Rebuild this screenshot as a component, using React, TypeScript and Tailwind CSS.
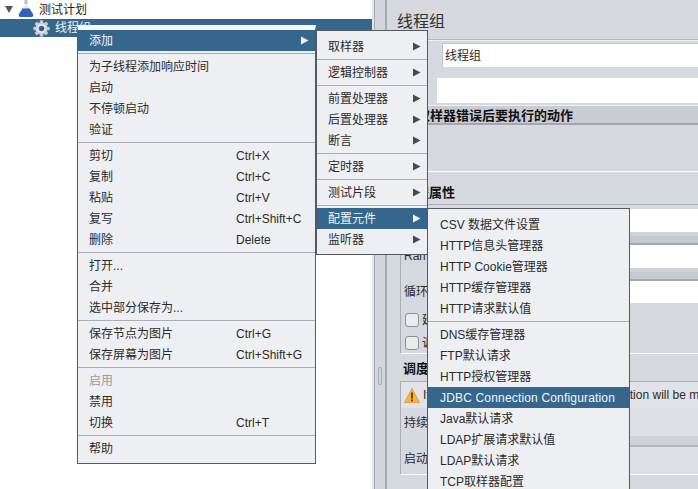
import React from "react";

type Entry =
  | { sep: true }
  | { label: string; shortcut?: string; arrow?: boolean; active?: boolean; disabled?: boolean; wide?: boolean; sep?: false };

const S: Entry = { sep: true };

const menu1: Entry[] = [
  { label: "添加", arrow: true, active: true },
  S,
  { label: "为子线程添加响应时间" },
  { label: "启动" },
  { label: "不停顿启动" },
  { label: "验证" },
  S,
  { label: "剪切", shortcut: "Ctrl+X" },
  { label: "复制", shortcut: "Ctrl+C" },
  { label: "粘贴", shortcut: "Ctrl+V" },
  { label: "复写", shortcut: "Ctrl+Shift+C" },
  { label: "删除", shortcut: "Delete" },
  S,
  { label: "打开..." },
  { label: "合并" },
  { label: "选中部分保存为..." },
  S,
  { label: "保存节点为图片", shortcut: "Ctrl+G" },
  { label: "保存屏幕为图片", shortcut: "Ctrl+Shift+G" },
  S,
  { label: "启用", disabled: true },
  { label: "禁用" },
  { label: "切换", shortcut: "Ctrl+T" },
  S,
  { label: "帮助" },
];

const menu2: Entry[] = [
  { label: "取样器", arrow: true },
  S,
  { label: "逻辑控制器", arrow: true },
  S,
  { label: "前置处理器", arrow: true },
  { label: "后置处理器", arrow: true },
  { label: "断言", arrow: true },
  S,
  { label: "定时器", arrow: true },
  S,
  { label: "测试片段", arrow: true },
  S,
  { label: "配置元件", arrow: true, active: true },
  { label: "监听器", arrow: true },
];

const menu3: Entry[] = [
  { label: "CSV 数据文件设置" },
  { label: "HTTP信息头管理器" },
  { label: "HTTP Cookie管理器" },
  { label: "HTTP缓存管理器" },
  { label: "HTTP请求默认值" },
  S,
  { label: "DNS缓存管理器" },
  { label: "FTP默认请求" },
  { label: "HTTP授权管理器" },
  { label: "JDBC Connection Configuration", active: true, wide: true },
  { label: "Java默认请求" },
  { label: "LDAP扩展请求默认值" },
  { label: "LDAP默认请求" },
  { label: "TCP取样器配置" },
];

function MenuRows({ items, textPad, shortcutLeft }: { items: Entry[]; textPad: string; shortcutLeft?: string }) {
  return (
    <>
      {items.map((it, i) =>
        it.sep ? (
          <div key={i} className="h-[5px] flex items-center">
            <div className="h-px w-full bg-[#a9adb5]" />
          </div>
        ) : (
          <div
            key={i}
            className={`relative h-[21px] flex items-center whitespace-nowrap ${textPad} ${
              it.active ? "bg-[#35678c] text-[#f2f5f8]" : it.disabled ? "text-[#9a9ca2]" : "text-[#2b2b2b]"
            }`}
          >
            <span className={it.wide ? "tracking-[0.17px]" : ""}>{it.label}</span>
            {it.shortcut && <span className={`absolute ${shortcutLeft}`}>{it.shortcut}</span>}
            {it.arrow && (
              <svg className="absolute right-[6px] top-[6px]" width="9" height="9" viewBox="0 0 9 9">
                <path d="M1 0.5 L8.5 4.5 L1 8.5 Z" fill={it.active ? "#f0f4f8" : "#4a4a4e"} />
              </svg>
            )}
          </div>
        )
      )}
    </>
  );
}

function Flask() {
  return (
    <svg width="16" height="19" viewBox="0 0 16 19">
      <path d="M6.5 0 L9.5 0 L9.5 6 L15 15 Q16 18 13 18 L3 18 Q0 18 1 15 L6.5 6 Z" fill="#e9edf3" />
      <path d="M4.5 9.5 L11.5 9.5 L15 15 Q16 18 13 18 L3 18 Q0 18 1 15 Z" fill="#2f62b5" />
      <path d="M6.5 0 L9.5 0 L9.5 5 L6.5 5 Z" fill="#b9c4d4" />
    </svg>
  );
}

function Gear() {
  const teeth = [0, 45, 90, 135];
  return (
    <svg width="17" height="17" viewBox="0 0 17 17">
      {teeth.map((a) => (
        <rect key={a} x="6.7" y="0.3" width="3.6" height="16.4" rx="0.8" fill="#c3c8d0" transform={`rotate(${a} 8.5 8.5)`} />
      ))}
      <circle cx="8.5" cy="8.5" r="6" fill="#cfd3da" />
      <circle cx="8.5" cy="8.5" r="4" fill="#f3f5f8" />
      <circle cx="8.5" cy="8.5" r="2.8" fill="#3b5aa0" />
    </svg>
  );
}

function Warn() {
  return (
    <svg className="shrink-0" width="16" height="15" viewBox="0 0 16 15">
      <path d="M8 0.5 L15.5 14.5 L0.5 14.5 Z" fill="#f3b73d" stroke="#d99a2b" strokeWidth="0.8" />
      <rect x="7.1" y="4.5" width="1.8" height="6" fill="#5a3b10" />
      <rect x="7.1" y="11.5" width="1.8" height="1.8" fill="#5a3b10" />
    </svg>
  );
}

function Check({ label }: { label: string }) {
  return (
    <div className="flex h-[23px] items-center gap-[2px] pl-[4px] whitespace-nowrap">
      <div className="h-[14px] w-[14px] rounded-[3px] border border-[#8b8f97] bg-[#e9ebef]" />
      <span className="ml-[1px]">{label}</span>
    </div>
  );
}

function FieldRow({ label, band = true }: { label: string; band?: boolean }) {
  return (
    <div className="flex h-[36px] whitespace-nowrap">
      <div className="w-[90px] shrink-0 pl-[3px] h-[24px] leading-[22px]">{label}</div>
      <div className="flex-1 flex flex-col">
        <div className="h-[23px] bg-white" />
        {band && <div className="h-[13px] bg-[#c6c9d1] border-b-2 border-[#a4a7ae] border-t-4 border-t-[#d0d3da]" />}
      </div>
    </div>
  );
}

export default function App() {
  return (
    <div
      className="relative w-[698px] h-[489px] overflow-hidden flex bg-[#d6d9df] text-[12px] text-[#2b2b2b]"
      style={{ fontFamily: '"Liberation Sans", "Noto Sans CJK SC", sans-serif' }}
    >
      {/* Tree */}
      <div className="w-[372px] shrink-0 bg-white flex flex-col">
        <div className="h-[19px] flex items-center relative">
          <svg className="ml-[5px]" width="8" height="7" viewBox="0 0 8 7">
            <path d="M0 0 L8 0 L4 7 Z" fill="#55585e" />
          </svg>
          <div className="ml-[5px] w-[16px] -mt-[2px]">
            <Flask />
          </div>
          <span className="ml-[5px] text-[#1f1f1f]">测试计划</span>
        </div>
        <div className="h-[18px] flex items-center bg-[#35678c] pl-[33px]">
          <Gear />
          <span className="ml-[5px] text-[#f2f5f8]">线程组</span>
        </div>
      </div>

      {/* Split bar */}
      <div className="w-[15px] shrink-0 flex border-l-2 border-l-[#e3e5ea] border-r-2 border-r-[#a7abb3] bg-[#d3d6dc]">
        <div className="w-px bg-[#a7abb3]" />
        <div className="pl-[3px] pt-[367px]">
          <div className="h-[18px] w-[4px] rounded-[2px] border border-[#a7abb3]" />
        </div>
      </div>

      {/* Right panel */}
      <div className="flex-1 min-w-0 flex flex-col overflow-hidden">
        <div className="h-[39px] shrink-0 pl-[10px] pt-[11px] text-[16px] leading-[22px] text-[#333]">线程组</div>
        <div className="h-[2px] shrink-0 bg-[#eef0f3] border-t border-[#b4b8c0]" />
        <div className="h-[64px] shrink-0 flex flex-col">
          <div className="flex h-[34px] pt-[2px] pl-[12px] whitespace-nowrap">
            <span className="w-[43px] leading-[24px]">名称：</span>
            <div className="flex-1 h-[24px] bg-white pl-[2px] leading-[24px] border-l border-t border-[#c3c6cd]">线程组</div>
          </div>
          <div className="flex h-[30px] pl-[12px] whitespace-nowrap pt-[3px]">
            <span className="w-[38px] leading-[24px]">注释：</span>
            <div className="flex-1 h-[25px] bg-white" />
          </div>
        </div>
        <div className="h-[20px] shrink-0 pl-[17px] font-bold text-[13px] leading-[20px] whitespace-nowrap bg-[#c9ccd3] border-t border-[#eef0f3] border-b-2 border-b-[#a4a7ae] text-[#111]">
          在取样器错误后要执行的动作
        </div>
        <div className="h-[47px] shrink-0 border-b border-white" />
        <div className="h-[32px] shrink-0 pl-[16px] pt-[12px] font-bold text-[13px] leading-[18px] text-[#111]">线程属性</div>

        <div className="ml-[13px] -mr-[4px] border border-[#a9adb5] border-r-0 border-b-white pt-[4px] h-[150px] shrink-0 bg-[#d6d9df]">
          <FieldRow label="线程数：" />
          <FieldRow label="Ramp-Up时间（秒）：" />
          <div className="flex h-[22px] whitespace-nowrap">
            <div className="w-[90px] shrink-0 pl-[3px] leading-[22px]">循环次数</div>
            <div className="flex-1 bg-white" />
          </div>
          <div className="pt-[5px]">
            <Check label="延迟创建线程直到需要" />
            <Check label="调度器" />
          </div>
        </div>

        <div className="h-[27px] shrink-0 pl-[16px] pt-[6px] font-bold text-[13px] leading-[18px] text-[#111]">调度器</div>

        <div className="ml-[13px] border border-[#a9adb5] border-r-0 border-b-white h-[94px] shrink-0 flex flex-col">
          <div className="h-[26px] shrink-0 flex items-center gap-[3px] pl-[3px] bg-[#e1e3e8] whitespace-nowrap">
            <Warn />
            <span>If Loop Count is not -1 or Forever, duration will be min(Duration, Loop Count * iteration duration)</span>
          </div>
          <div className="flex h-[39px] shrink-0 whitespace-nowrap">
            <div className="w-[90px] pl-[3px] shrink-0 leading-[30px]">持续时间（秒）</div>
            <div className="flex-1 flex flex-col">
              <div className="h-[28px] bg-[#dee0e5]" />
              <div className="h-[11px] bg-[#cfd2d9] border-b-2 border-[#b3b6bd]" />
            </div>
          </div>
          <div className="flex flex-1 whitespace-nowrap bg-[#d6d9df]">
            <div className="w-[90px] pl-[3px] shrink-0 leading-[24px]">启动延迟（秒）</div>
            <div className="flex-1 bg-[#dee0e5]" />
          </div>
        </div>
      </div>

      {/* Context menus */}
      <div className="absolute left-[77px] top-[25px] w-[239px] h-[439px] bg-[#eeeff3] border-x border-b border-x-[#56595f] border-b-[#56595f] border-t-[5px] border-t-[#f8f9fb]">
        <MenuRows items={menu1} textPad="pl-[11px]" shortcutLeft="left-[158px]" />
      </div>
      <div className="absolute left-[316px] top-[30px] w-[112px] h-[225px] bg-[#eeeff3] border border-[#56595f] pt-[5px]">
        <MenuRows items={menu2} textPad="pl-[11px]" />
      </div>
      <div className="absolute left-[427px] top-[208px] w-[203px] h-[300px] bg-[#eeeff3] border border-[#56595f] pt-[5px]">
        <MenuRows items={menu3} textPad="pl-[12px]" />
      </div>
    </div>
  );
}
